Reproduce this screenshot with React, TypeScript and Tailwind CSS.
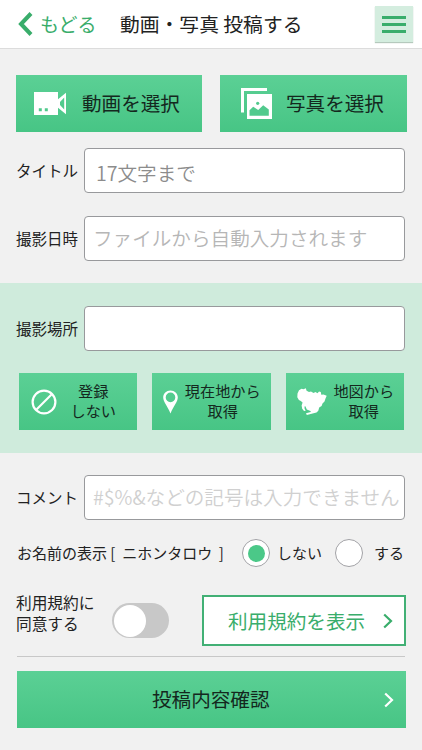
import { useState } from "react";
import type { ReactNode } from "react";

const GREEN_BUTTON =
  "flex h-[57px] items-center bg-linear-to-b from-[#5bd095] to-[#47c585] text-[#14281e]";

function Chevron({ className }: { className?: string }) {
  return (
    <svg viewBox="0 0 10 16" className={className} fill="none" stroke="currentColor" strokeWidth="2.2">
      <path d="M1.2 1.500 8 8 1.200 14.500" />
    </svg>
  );
}

function VideoIcon() {
  return (
    <svg viewBox="0 0 32 23" className="h-[23px] w-8 shrink-0" fill="white">
      <path
        fillRule="evenodd"
        d="M0 0h24v7.200L32 0.800v21.400L24 15.800V23H0ZM4.800 16.200v3h3v-3ZM10.800 16.200v3h3v-3ZM30.200 5.500 26 10v3L30.200 17.500Z"
      />
    </svg>
  );
}

function PhotoIcon() {
  return (
    <svg viewBox="0 0 31 31" className="h-[31px] w-[31px] shrink-0">
      <path d="M0 0h26v3H3v21.500H0Z" fill="white" />
      <path d="M6 6h25v25H6Z" fill="white" />
      <circle cx="16.700" cy="15.300" r="1.600" fill="#51ca8d" />
      <path d="M8.500 27.700V22.300L12.200 18.700l5 3.200 5-4.700 5.600 4.300v6.200Z" fill="#51ca8d" />
    </svg>
  );
}

function BanIcon() {
  return (
    <svg viewBox="0 0 26 26" className="h-[26px] w-[26px] shrink-0" fill="none" stroke="white" strokeWidth="2.200">
      <circle cx="13" cy="13" r="11.400" />
      <path d="M5 21 21 5" />
    </svg>
  );
}

function PinIcon() {
  return (
    <svg viewBox="0 0 15 24" className="h-6 w-[15px] shrink-0" fill="white">
      <path
        fillRule="evenodd"
        d="M7.500 0.500C3.400 0.500 0.200 3.600 0.200 7.500c0 4.300 4.300 8.600 7.300 16 3-7.400 7.300-11.700 7.300-16C14.800 3.600 11.600 0.500 7.500 0.500ZM7.500 2.600a4.800 4.800 0 1 1 0 9.600 4.800 4.800 0 0 1 0-9.600Z"
      />
    </svg>
  );
}

function PrefectureIcon() {
  return (
    <svg viewBox="0 0 30 27" className="h-[27px] w-[30px] shrink-0" fill="white">
      <path d="M2 2.200 4.500 0.800 6.500 1.300 8.800 0.300 9.600 2.700 12 4 14 3.600 16.500 5 18.500 4 20.500 5.200 22 3.600 23.800 4 24.300 6.800 26.500 6.600 29.700 7.800 28.500 10.500 27.500 13.500 25.500 15.500 24.600 18 22.200 19.500 21.300 22.800 19.500 24.600 9.800 26.900 9 25.200 13.800 23.900 13.500 23 9.800 21.500 8.400 18.300 7.500 18.500 7.600 20.800 8.700 22.800 7 23 5.200 20.800 4.600 17.500 5.600 14.600 3.800 12.900 1.900 12 0.300 9.200 0.500 5.500Z" />
    </svg>
  );
}

function Field({ label, placeholder, inputClass = "" }: { label: string; placeholder?: string; inputClass?: string }) {
  return (
    <label className="flex h-[45px] items-center pl-4 pr-[17px]">
      <span className="w-[68px] shrink-0 whitespace-nowrap text-[15.5px]">{label}</span>
      <input
        type="text"
        placeholder={placeholder}
        className={`h-[45px] w-full min-w-0 rounded-[4px] border border-[#98999c] bg-white text-[19.6px] outline-none placeholder:font-[350] ${inputClass}`}
      />
    </label>
  );
}

function PlaceButton({ icon, children, className }: { icon: ReactNode; children: ReactNode; className: string }) {
  return (
    <button type="button" className={`${GREEN_BUTTON} w-[118.500px] text-[15.2px] leading-5 ${className}`}>
      {icon}
      <span className="flex-1 whitespace-nowrap pb-[3px] text-center">{children}</span>
    </button>
  );
}

function Radio({ checked, onChange }: { checked: boolean; onChange: () => void }) {
  return (
    <button
      type="button"
      role="radio"
      aria-checked={checked}
      onClick={onChange}
      className="flex size-7 shrink-0 items-center justify-center rounded-full border border-[#a2a2a6] bg-white"
    >
      {checked && <span className="size-[17px] rounded-full bg-[#4bc888]" />}
    </button>
  );
}

export default function App() {
  const [showName, setShowName] = useState(false);
  const [agreed, setAgreed] = useState(false);

  return (
    <div
      lang="ja"
      className="flex h-[750px] w-[422px] flex-col overflow-hidden bg-[#f1f1f1] font-['Noto_Sans_CJK_JP',sans-serif] text-[#222]"
    >
      <header className="flex h-[49px] shrink-0 items-center border-b border-[#dcdcdc] bg-white pl-[18px] pr-[9px]">
        <button type="button" className="flex w-[102px] items-center text-[#39ad6b]">
          <svg viewBox="0 0 15 24" className="mr-[7px] h-6 w-[15px]" fill="none" stroke="currentColor" strokeWidth="4">
            <path d="M13 1.500 3 12l10 10.500" />
          </svg>
          <span className="text-[19px]">もどる</span>
        </button>
        <h1 className="flex-1 whitespace-nowrap text-[19.8px]">動画・写真 投稿する</h1>
        <button
          type="button"
          className="flex h-[36px] w-[38px] flex-col items-center justify-center gap-1 bg-[#d4eddf] shadow-[0_1px_1px_#b5c9bd]"
        >
          <span className="h-[3px] w-6 bg-[#39ad6b]" />
          <span className="h-[3px] w-6 bg-[#39ad6b]" />
          <span className="h-[3px] w-6 bg-[#39ad6b]" />
        </button>
      </header>

      <div className="mt-[26px] flex shrink-0 gap-[18px] pl-4 text-[19.6px]">
        <button type="button" className={`${GREEN_BUTTON} w-[186px] gap-4 pl-[18px]`}>
          <VideoIcon />
          <span className="pb-[2px]">動画を選択</span>
        </button>
        <button type="button" className={`${GREEN_BUTTON} w-[186.500px] gap-[14px] pl-[21px]`}>
          <PhotoIcon />
          <span className="pb-[2px]">写真を選択</span>
        </button>
      </div>

      <div className="mt-4 flex shrink-0 flex-col gap-[23px]">
        <Field label="タイトル" placeholder="17文字まで" inputClass="pl-[11px] pt-1 placeholder:text-[#8c8c8c]" />
        <Field label="撮影日時" placeholder="ファイルから自動入力されます" inputClass="pb-[3px] pl-2 placeholder:text-[#b6b6b6]" />
      </div>

      <section className="mt-[22px] h-[170px] shrink-0 bg-[#cfebdc] pt-[23px]">
        <Field label="撮影場所" inputClass="pl-2" />
        <div className="mt-[22px] flex gap-[15px] pl-[18.500px]">
          <PlaceButton icon={<BanIcon />} className="pl-3 pr-[7px]">
            登録
            <br />
            しない
          </PlaceButton>
          <PlaceButton icon={<PinIcon />} className="pl-[11px] pr-[3px]">
            現在地から
            <br />
            取得
          </PlaceButton>
          <PlaceButton icon={<PrefectureIcon />} className="pl-[11px] pr-[3px]">
            地図から
            <br />
            取得
          </PlaceButton>
        </div>
      </section>

      <div className="mt-[22px] shrink-0">
        <Field
          label="コメント"
          placeholder="#$%&などの記号は入力できません"
          inputClass="pb-[3px] pl-2 placeholder:text-[#d0d0d0]"
        />
      </div>

      <div className="mt-[19px] flex h-7 shrink-0 items-center pl-[17px] text-[15px]">
        <span className="w-[225px] whitespace-pre">お名前の表示 [  ニホンタロウ  ]</span>
        <Radio checked={!showName} onChange={() => setShowName(false)} />
        <span className="ml-[7px] w-[58px]">しない</span>
        <Radio checked={showName} onChange={() => setShowName(true)} />
        <span className="ml-[11px]">する</span>
      </div>

      <div className="mt-[28px] flex h-[51px] shrink-0 pl-4">
        <p className="-mt-[3px] w-24 text-[15.7px] leading-[21px]">
          利用規約に
          <br />
          同意する
        </p>
        <button
          type="button"
          role="switch"
          aria-checked={agreed}
          onClick={() => setAgreed(!agreed)}
          className={`mt-[8px] flex h-[35px] w-[57px] items-center rounded-full px-[1.500px] ${
            agreed ? "justify-end bg-[#4bc888]" : "bg-[#c8c8c8]"
          }`}
        >
          <span className="size-8 rounded-full bg-white" />
        </button>
        <button
          type="button"
          className="ml-[33px] flex h-[51px] w-[203.500px] items-center border-2 border-[#42b075] bg-white pl-[24px] text-[19.6px] text-[#39ad6b]"
        >
          <span>利用規約を表示</span>
          <Chevron className="ml-[18px] h-4 w-[10px]" />
        </button>
      </div>

      <hr className="ml-[17px] mr-[17px] mt-[10px] shrink-0 border-[#c8c8c8]" />

      <button type="button" className={`${GREEN_BUTTON} ml-[17px] mt-[14px] w-[388.500px] shrink-0 pl-[135px] text-[19.6px]`}>
        <span className="pb-[2px]">投稿内容確認</span>
        <Chevron className="ml-auto mr-[12px] h-4 w-[10px] text-white" />
      </button>
    </div>
  );
}
